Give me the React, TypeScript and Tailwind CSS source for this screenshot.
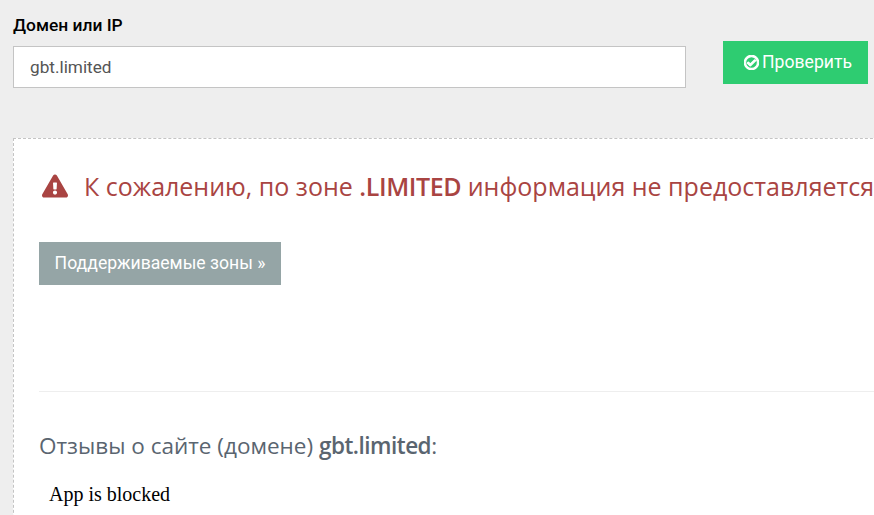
import { FaExclamationTriangle, FaRegCheckCircle } from "react-icons/fa";

export default function App() {
  return (
    <div className="h-[515px] w-[874px] overflow-hidden bg-[#eeeeee] font-['Roboto',sans-serif]">
      <div className="flex items-start pl-[13px] pt-[15px]">
        <div className="w-[673px] shrink-0">
          <label className="block text-[17.4px] leading-[20px] font-medium text-black">Домен или IP</label>
          <input
            readOnly
            value="gbt.limited"
            className="mt-[11px] block h-[42px] w-full border border-[#c4c4c4] bg-white px-[16px] text-[17.2px] text-[#555555] outline-none"
          />
        </div>
        <button className="mt-[26px] ml-[37px] flex h-[43px] w-[145px] shrink-0 items-center justify-center gap-[3px] bg-[#2ecc71] pl-[5px] text-[17.6px] text-white">
          <FaRegCheckCircle className="h-[15px] w-[15px]" stroke="currentColor" strokeWidth={36} />
          Проверить
        </button>
      </div>

      <div className="mt-[50px] ml-[13px] h-[400px] w-[900px] border-t border-l border-dashed border-[#c4c4c4] bg-white pl-[25px]">
        <div className="mt-[32px] flex items-center pl-[3px] font-['Open_Sans',sans-serif] text-[25px] leading-[30px] whitespace-nowrap text-[#a94442]">
          <FaExclamationTriangle className="h-[26px] w-[26px] shrink-0" />
          <span className="ml-[16px]">
            К сожалению, по зоне <b className="font-semibold tracking-[-0.4px]">.LIMITED</b> информация не предоставляется
          </span>
        </div>
        <button className="mt-[41px] block h-[43px] w-[242px] bg-[#95a5a6] text-[17.6px] text-white">
          Поддерживаемые зоны »
        </button>
        <div className="mt-[106px] w-[860px] border-t border-[#eeeeee]" />
        <h3 className="mt-[40px] font-['Open_Sans',sans-serif] text-[22.5px] leading-[28px] whitespace-nowrap text-[#5a6570]">
          Отзывы о сайте (домене) <b className="font-semibold tracking-[-0.5px]">gbt.limited</b>:
        </h3>
        <p className="mt-[22px] pl-[10px] font-['Liberation_Serif',serif] text-[20px] leading-[24px] text-black">App is blocked</p>
      </div>
    </div>
  );
}
